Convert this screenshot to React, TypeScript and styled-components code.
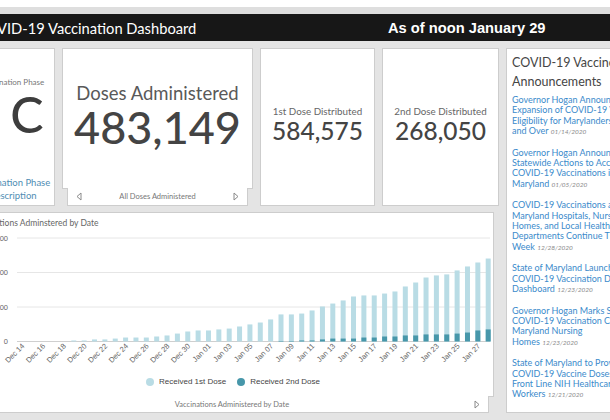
import React from 'react';
import styled, { createGlobalStyle } from 'styled-components';

const GlobalStyle = createGlobalStyle`
  html, body {
    margin: 0;
    padding: 0;
    overflow: hidden;
    background: #e4e4e4;
  }
  body {
    font-family: Lato, "Open Sans", "Liberation Sans", sans-serif;
  }
`;

const LIGHT = '#b9dce5';
const DARK = '#4797aa';
const LINE = '#cdcdcd';

// the dashboard is wider than the window and scrolled a little to the right
const Page = styled.div`
  width: 720px;
  margin-left: -56px;
`;

const BrowserEdge = styled.div`
  height: 7px;
  background: #fff;
  border-bottom: 7px solid #dedede;
`;

const Header = styled.header`
  height: 27px;
  background: #171717;
  color: #fff;
  display: grid;
  grid-template-columns: 412px 1fr;
  align-items: center;
  padding-left: 32px;
`;

const Title = styled.h1`
  margin: 0;
  font-size: 14.7px;
  font-weight: 400;
  white-space: nowrap;
`;

const AsOf = styled.div`
  font-family: "Liberation Sans", Arial, sans-serif;
  font-size: 14.7px;
  font-weight: 700;
  white-space: nowrap;
`;

const Board = styled.main`
  display: grid;
  grid-template-columns: 107px 191px 115px 117px 140px;
  grid-template-rows: 158px 201px;
  gap: 6px 7px;
  padding: 7px 0 0 4px;
`;

const Panel = styled.section`
  background: #fff;
  border: 1px solid ${LINE};
  box-sizing: border-box;
  overflow: hidden;
  min-width: 0;
  min-height: 0;
`;

/* ---- phase indicator ---- */

const PhasePanel = styled(Panel)`
  display: flex;
  flex-direction: column;
  align-items: center;
  text-align: center;
  padding: 28px 0 3px 22px;
`;

const SmallLabel = styled.div`
  font-size: 8px;
  line-height: 10px;
  color: #777;
  white-space: nowrap;
`;

const PhaseValue = styled.div`
  margin-top: 2px;
  font-size: 50px;
  font-weight: 500;
  line-height: 1;
  letter-spacing: 10px;
  color: #3d3d3d;
`;

const PhaseLink = styled.a`
  margin-top: auto;
  font-size: 9.5px;
  line-height: 13px;
  color: #4f8db3;
  text-decoration: none;
  white-space: nowrap;
`;

/* ---- cards with a selector tab underneath ---- */

const TabCard = styled.section<{ $trimRight?: number }>`
  display: flex;
  flex-direction: column;
  min-width: 0;
  margin-right: ${(p) => p.$trimRight ?? 0}px;
`;

const TabBody = styled.div`
  flex: 1;
  background: #fff;
  border: 1px solid ${LINE};
  display: flex;
  flex-direction: column;
  align-items: center;
  overflow: hidden;
`;

const TabFooter = styled.div<{ $height: number }>`
  height: ${(p) => p.$height}px;
  margin: -1px 5px 0;
  background: #fff;
  border: 1px solid ${LINE};
  border-top: none;
  display: flex;
  align-items: center;
  padding: 0 8px;
  font-size: 7.5px;
  color: #777;
`;

const FooterText = styled.span<{ $shift?: number }>`
  flex: 1;
  text-align: center;
  padding-left: ${(p) => p.$shift ?? 0}px;
  white-space: nowrap;
`;

const Arrow = ({ dir }: { dir: 'left' | 'right' }) => (
  <svg width="6" height="9" viewBox="0 0 6 9">
    <polygon
      points={dir === 'left' ? '5,1 1,4.5 5,8' : '1,1 5,4.5 1,8'}
      fill="none"
      stroke="#8a8a8a"
      strokeWidth="1"
    />
  </svg>
);

const BigTitle = styled.div`
  margin-top: 33px;
  font-size: 18.5px;
  line-height: 1.2;
  color: #595959;
  white-space: nowrap;
`;

const BigNumber = styled.div`
  font-size: 45px;
  font-weight: 500;
  line-height: 1;
  margin-top: 1px;
  color: #444;
  white-space: nowrap;
`;

/* ---- distributed counters ---- */

const CountPanel = styled(Panel)`
  display: flex;
  flex-direction: column;
  align-items: center;
  justify-content: center;
  padding-bottom: 4px;
`;

const CountLabel = styled.div`
  font-size: 9.8px;
  line-height: 13px;
  color: #666;
  white-space: nowrap;
`;

const CountValue = styled.div`
  font-size: 24.5px;
  font-weight: 500;
  line-height: 1.1;
  color: #444;
  white-space: nowrap;
`;

/* ---- announcements ---- */

const NewsPanel = styled(Panel)`
  grid-column: 5;
  grid-row: 1 / span 2;
  padding: 4px 6px 0 5px;
`;

const NewsTitle = styled.h2`
  margin: 0 0 4px;
  font-size: 12.5px;
  line-height: 19px;
  font-weight: 400;
  color: #454545;
  width: 128px;
`;

const NewsItem = styled.p`
  margin: 0 0 10px;
  width: 134px;
  font-size: 9px;
  line-height: 10.4px;
  color: #3a8acb;
`;

const NoWrap = styled.span`
  white-space: nowrap;
`;

const NewsDate = styled.span`
  font-size: 6.5px;
  font-style: italic;
  color: #8a8a8a;
`;

/* ---- chart ---- */

const ChartBody = styled(TabBody)`
  align-items: stretch;
`;

const ChartTitle = styled.div`
  padding: 3px 0 0 22px;
  font-size: 8.5px;
  line-height: 14px;
  color: #666;
  white-space: nowrap;
`;

const Legend = styled.div`
  margin-top: 6px;
  display: flex;
  justify-content: center;
  gap: 11px;
  padding-left: 24px;
  font-family: "Liberation Sans", Arial, sans-serif;
  font-size: 8px;
  line-height: 12px;
  color: #444;
`;

const LegendItem = styled.span`
  display: inline-flex;
  align-items: center;
  gap: 5px;
`;

const Dot = styled.span<{ $color: string }>`
  width: 8px;
  height: 8px;
  border-radius: 50%;
  background: ${(p) => p.$color};
`;

// total doses (thousands) and 2nd doses (thousands), Dec 14 .. Jan 28
const totals = [
  0, 0, 0, 0, 0, 6, 6, 12, 12, 17, 23, 23, 23, 29, 35, 46, 58, 64, 64, 70, 75, 87, 99,
  110, 128, 157, 157, 162, 180, 203, 220, 238, 261, 267, 267, 278, 290, 319, 342, 371,
  383, 389, 412, 435, 458, 481,
];
const seconds = [
  0, 0, 0, 0, 0, 0, 0, 0, 0, 0, 0, 0, 0, 0, 0, 0, 0, 0, 0, 0, 0, 0, 0, 0, 0, 3, 3, 6, 6,
  12, 17, 17, 17, 23, 23, 29, 29, 35, 35, 41, 41, 41, 46, 52, 64, 70,
];

const dayLabel = (i: number) => {
  const d = 14 + i;
  return d <= 31 ? `Dec ${d}` : `Jan ${String(d - 31).padStart(2, '0')}`;
};

const BASE_Y = 111.5;
const STEP = 34.5;
const PX_PER_K = STEP / 200;
const X0 = 73;
const DX = 10.36;
const BAR_W = 5;

const DosesChart = () => (
  <svg width="544" height="140" style={{ display: 'block' }}>
    {[0, 1, 2, 3].map((k) => {
      const y = BASE_Y - k * STEP;
      return (
        <g key={k}>
          <line x1="68" x2="541" y1={y} y2={y} stroke={k === 0 ? '#cfcfcf' : '#e6e6e6'} />
          <text
            x="59"
            y={y + 2.5}
            textAnchor="end"
            fontSize="7.5"
            fill="#666"
            fontFamily="Liberation Sans, Arial, sans-serif"
          >
            {k === 0 ? '0' : `${k * 200},000`}
          </text>
        </g>
      );
    })}
    {totals.map((t, i) => {
      const cx = X0 + i * DX;
      const h = t * PX_PER_K;
      const h2 = seconds[i] * PX_PER_K;
      return (
        <g key={i}>
          {h > 0 && <rect x={cx - BAR_W / 2} y={BASE_Y - h} width={BAR_W} height={h} fill={LIGHT} />}
          {h2 > 0 && <rect x={cx - BAR_W / 2} y={BASE_Y - h2} width={BAR_W} height={h2} fill={DARK} />}
          {i % 2 === 0 && (
            <text
              x={cx + 3}
              y={BASE_Y + 5}
              transform={`rotate(-45 ${cx + 3} ${BASE_Y + 5})`}
              textAnchor="end"
              fontSize="7.5"
              fill="#666"
              fontFamily="Liberation Sans, Arial, sans-serif"
            >
              {dayLabel(i)}
            </text>
          )}
        </g>
      );
    })}
  </svg>
);

const news = [
  { text: 'Governor Hogan Announces Expansion of COVID-19 Vaccine Eligibility for Marylanders 65', last: 'and Over', date: '01/14/2020' },
  { text: 'Governor Hogan Announces Statewide Actions to Accelerate COVID-19 Vaccinations in', last: 'Maryland', date: '01/05/2020' },
  { text: 'COVID-19 Vaccinations at Maryland Hospitals, Nursing Homes, and Local Health Departments Continue This', last: 'Week', date: '12/28/2020' },
  { text: 'State of Maryland Launches COVID-19 Vaccination Data', last: 'Dashboard', date: '12/23/2020' },
  { text: 'Governor Hogan Marks Start of COVID-19 Vaccination Clinics in Maryland Nursing', last: 'Homes', date: '12/23/2020' },
  { text: 'State of Maryland to Provide COVID-19 Vaccine Doses for Front Line NIH Healthcare', last: 'Workers', date: '12/21/2020' },
  { text: 'Moderna COVID-19 Vaccine Arrives in', last: 'Maryland', date: '12/21/2020' },
];

export default function App() {
  return (
    <>
      <GlobalStyle />
      <Page>
        <BrowserEdge />
        <Header>
          <Title>COVID-19 Vaccination Dashboard</Title>
          <AsOf>As of noon January 29</AsOf>
        </Header>

        <Board>
          <PhasePanel>
            <SmallLabel>Vaccination Phase</SmallLabel>
            <PhaseValue>1C</PhaseValue>
            <PhaseLink href="#">
              Vaccination Phase
              <br />
              Description
            </PhaseLink>
          </PhasePanel>

          <TabCard>
            <TabBody>
              <BigTitle>Doses Administered</BigTitle>
              <BigNumber>483,149</BigNumber>
            </TabBody>
            <TabFooter $height={17}>
              <Arrow dir="left" />
              <FooterText>All Doses Administered</FooterText>
              <Arrow dir="right" />
            </TabFooter>
          </TabCard>

          <CountPanel>
            <CountLabel>1st Dose Distributed</CountLabel>
            <CountValue>584,575</CountValue>
          </CountPanel>

          <CountPanel>
            <CountLabel>2nd Dose Distributed</CountLabel>
            <CountValue>268,050</CountValue>
          </CountPanel>

          <NewsPanel>
            <NewsTitle>COVID-19 Vaccine Announcements</NewsTitle>
            {news.map((n) => (
              <NewsItem key={n.text}>
                {n.text}{' '}
                <NoWrap>
                  {n.last} <NewsDate>{n.date}</NewsDate>
                </NoWrap>
              </NewsItem>
            ))}
          </NewsPanel>

          <TabCard $trimRight={5} style={{ gridColumn: '1 / span 4' }}>
            <ChartBody>
              <ChartTitle>Vaccinations Adminstered by Date</ChartTitle>
              <DosesChart />
              <Legend>
                <LegendItem>
                  <Dot $color={LIGHT} />
                  Received 1st Dose
                </LegendItem>
                <LegendItem>
                  <Dot $color={DARK} />
                  Received 2nd Dose
                </LegendItem>
              </Legend>
            </ChartBody>
            <TabFooter $height={16}>
              <Arrow dir="left" />
              <FooterText $shift={22}>Vaccinations Administered by Date</FooterText>
              <Arrow dir="right" />
            </TabFooter>
          </TabCard>
        </Board>
      </Page>
    </>
  );
}
